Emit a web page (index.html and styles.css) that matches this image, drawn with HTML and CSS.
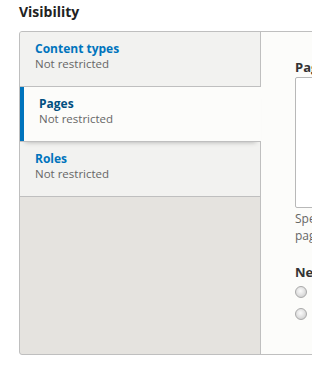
FILE: index.html
```html
<!DOCTYPE html>
<html lang="en">
<head>
  <meta charset="UTF-8">
  <title>Block visibility</title>
  <link rel="stylesheet" href="styles.css">
</head>
<body>
  <div class="page">
    <h2 class="section-title">Visibility</h2>

    <div class="vtabs">
      <ul class="vtabs-menu">
        <li class="vtabs-item">
          <a href="#" class="vtabs-link">
            <strong class="vtabs-title">Content types</strong>
            <span class="vtabs-summary">Not restricted</span>
          </a>
        </li>
        <li class="vtabs-item is-selected">
          <a href="#" class="vtabs-link">
            <strong class="vtabs-title">Pages</strong>
            <span class="vtabs-summary">Not restricted</span>
          </a>
        </li>
        <li class="vtabs-item">
          <a href="#" class="vtabs-link">
            <strong class="vtabs-title">Roles</strong>
            <span class="vtabs-summary">Not restricted</span>
          </a>
        </li>
      </ul>

      <div class="vtabs-pane">
        <label for="pages" class="form-label">Pages</label>
        <textarea id="pages" class="form-textarea"></textarea>
        <div class="description">
          Specify pages by using their paths. Enter one path per line. The '*' character is a wildcard. An example path is /user/* for every user<br>
          page. &lt;front&gt; is the front page.
        </div>

        <div class="form-label negate-label">Negate the condition</div>
        <label class="radio-row">
          <input type="radio" name="negate" class="form-radio" checked>
          Show for the listed pages
        </label>
        <label class="radio-row">
          <input type="radio" name="negate" class="form-radio">
          Hide for the listed pages
        </label>
      </div>
    </div>
  </div>
</body>
</html>
```

FILE: styles.css
```css
html, body {
  overflow: hidden;
}
body {
  margin: 0;
  background: #fff;
  color: #333;
  font-family: 'Open Sans', 'Noto Sans', sans-serif;
  font-size: 12px;
}
.page {
  padding-left: 19px;
  width: 1300px;
}
.section-title {
  margin: 0 0 10px;
  padding-top: 2px;
  font-size: 14px;
  line-height: 19px;
  font-weight: bold;
  color: #222;
}
.vtabs {
  display: flex;
  border: 1px solid #bfbfbf;
  border-radius: 3px;
  background: #e5e3df;
}
.vtabs-menu {
  flex: none;
  width: 240px;
  margin: 0;
  padding: 0;
  list-style: none;
}
.vtabs-item {
  background: #f2f2f0;
  border-bottom: 1px solid #bfbfbf;
}
.vtabs-item:first-child {
  border-top-left-radius: 2px;
}
.vtabs-item.is-selected {
  position: relative;
  z-index: 1;
  margin-right: -1px;
  background: #fcfcfa;
  box-shadow: 0 5px 5px -5px rgba(0,0,0,0.3);
}
.vtabs-link {
  display: block;
  padding: 9px 15px 15px;
  line-height: 15px;
  text-decoration: none;
}
.is-selected .vtabs-link {
  border-left: 4px solid #0074bd;
}
.vtabs-title {
  display: block;
  color: #0074bd;
}
.is-selected .vtabs-title {
  color: #004f80;
}
.vtabs-summary {
  display: block;
  font-size: 11.5px;
  color: #666;
}
.vtabs-pane {
  flex: 1;
  border-left: 1px solid #bfbfbf;
  background: #fcfcfa;
  padding: 26px 20px 29px 34px;
}
.form-label {
  display: block;
  margin-bottom: 1px;
  font-size: 13px;
  line-height: 18px;
  font-weight: bold;
  color: #333;
}
.form-textarea {
  display: block;
  box-sizing: border-box;
  width: 100%;
  height: 131px;
  margin: 0;
  border: 1px solid #b8b8b8;
  border-radius: 2px;
  background: #fff;
  resize: vertical;
}
.description {
  margin-top: 2px;
  line-height: 17px;
  color: #666;
}
.negate-label {
  margin: 19px 0 0;
}
.radio-row {
  display: flex;
  align-items: center;
  height: 22px;
  gap: 6px;
}
.form-radio {
  appearance: none;
  width: 12px;
  height: 12px;
  margin: 0;
  border: 1px solid #a9a9a9;
  border-radius: 50%;
  background: radial-gradient(circle at 45% 40%, #fbfbfb 0, #e4e4e4 45%, #c4c4c4 100%);
}
```
